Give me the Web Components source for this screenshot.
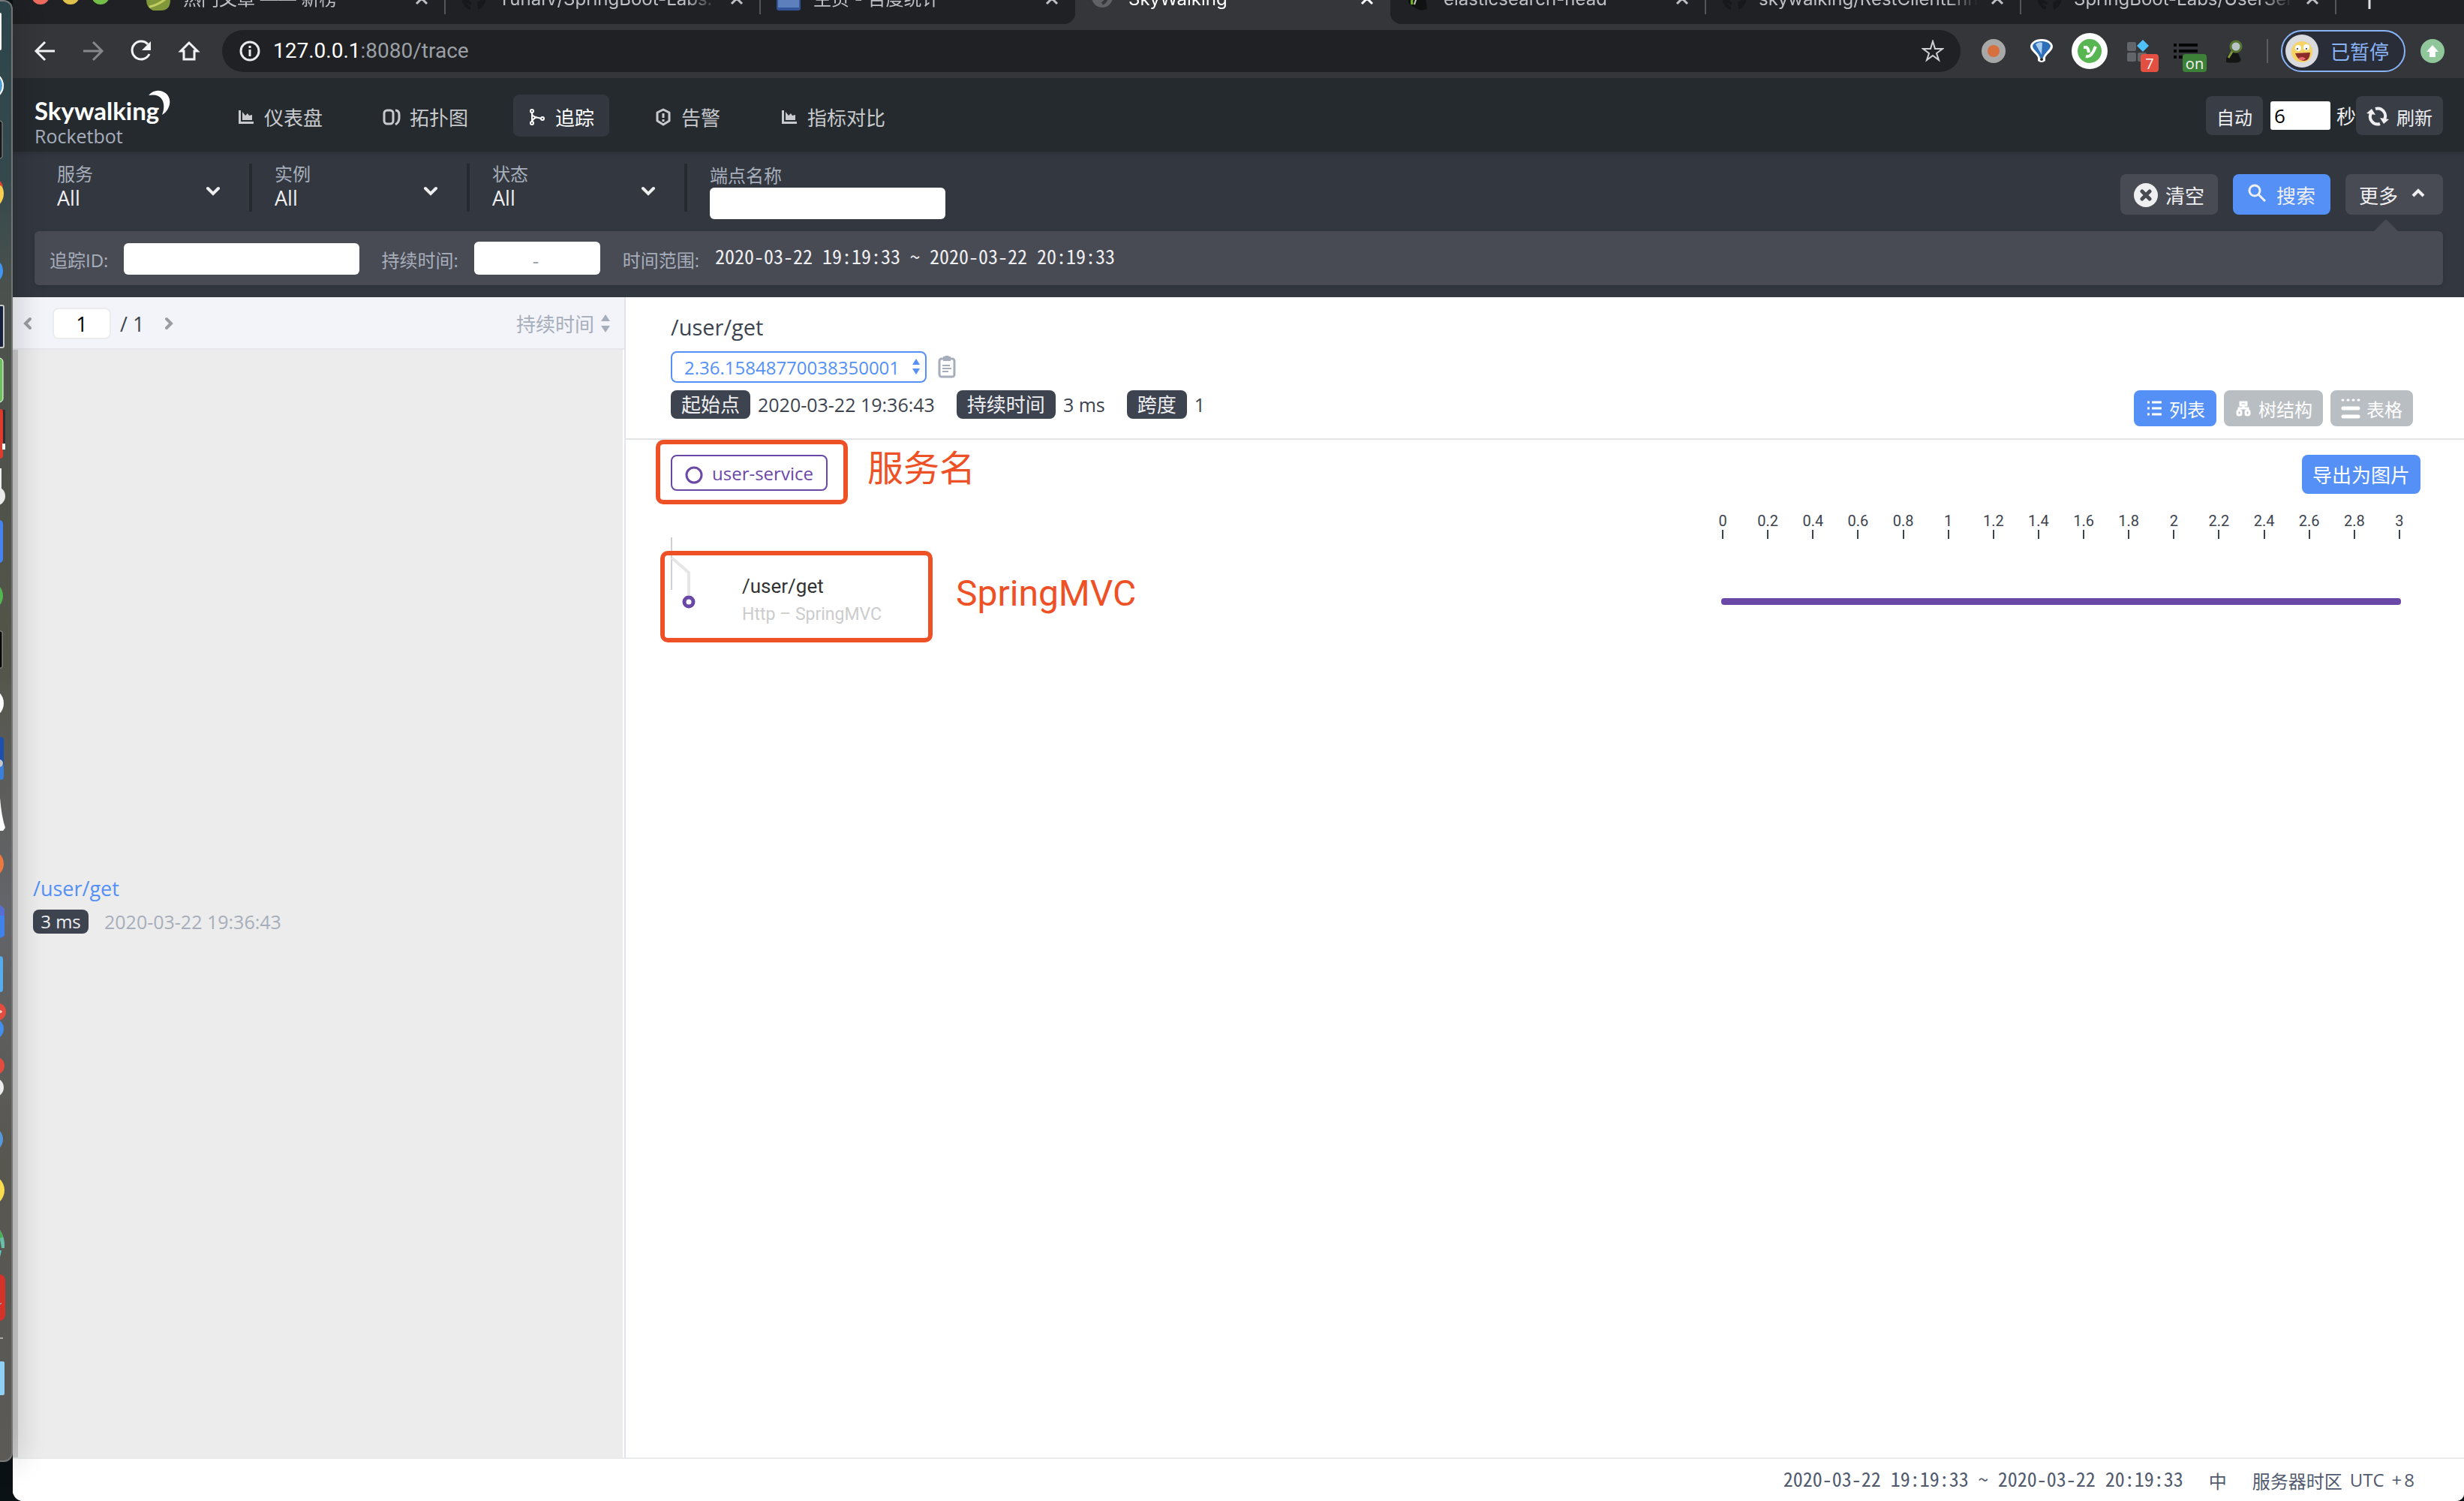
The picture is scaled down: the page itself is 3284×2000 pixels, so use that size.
<!DOCTYPE html>
<html lang="zh-CN">
<head>
<meta charset="utf-8">
<title>SkyWalking</title>
<style>
  html, body { margin: 0; height: 100%; }
  body { background: #0b1215; font-family: "Open Sans", "Noto Sans CJK SC", sans-serif; font-size: 26px; overflow: hidden; }
</style>
</head>
<body>
<desk-top></desk-top>
<script>
const BASE = `<style>
  *, *::before, *::after { box-sizing: border-box; }
  :host { display: block; }
  button, input, select { font: inherit; color: inherit; margin: 0; padding: 0; border: 0; background: none; outline: 0; }
  button { display: inline-flex; align-items: center; cursor: pointer; white-space: nowrap; }
  select { appearance: none; }
  a { color: inherit; text-decoration: none; }
  svg { display: block; flex: none; }
</style>`;

function define(tag, html) {
  const template = document.createElement('template');
  customElements.define(tag, class extends HTMLElement {
    constructor() {
      super();
      template.innerHTML = BASE + (typeof html === 'function' ? html(this) : html);
      this.attachShadow({ mode: 'open' }).append(template.content.cloneNode(true));
    }
  });
}

const ICONS = {
  chart: '<svg width="22" height="22" viewBox="0 0 22 22" fill="currentColor"><path d="M1 2h3v15h17v3H1z"/><path d="M6 15V4l4 5 3-3 2 3 4-1v7z"/></svg>',
  topo: '<svg width="24" height="24" viewBox="0 0 24 24" fill="none" stroke="currentColor" stroke-width="3"><rect x="2" y="3" width="12" height="18" rx="4"/><path d="M17 3q5 0 5 6v4q0 6-5 9" /></svg>',
  trace: '<svg width="24" height="24" viewBox="0 0 24 24" fill="none" stroke="currentColor" stroke-width="2"><circle cx="5" cy="4" r="2"/><circle cx="5" cy="20" r="2"/><circle cx="19" cy="14" r="2"/><path d="M5 6v12M5 8c2 5 6 4 12 6M5 18c1-4 4-5 7-6"/></svg>',
  alarm: '<svg width="24" height="24" viewBox="0 0 24 24" fill="none" stroke="currentColor" stroke-width="3"><path d="M12 2l8 4v11l-8 5-8-5V6z" stroke-linejoin="round"/><path d="M12 7v6M12 15v3"/></svg>',
  close: '<svg width="18" height="18" viewBox="0 0 18 18" stroke="currentColor" stroke-width="3"><path d="M2 2l14 14M16 2L2 16"/></svg>',
  github: '<svg width="32" height="32" viewBox="0 0 32 32"><path fill="#17181b" d="M16 0a16 16 0 0 0-5 31c1 0 1-4 1-5-4 0-5-3-5-4 2 1 3 3 6 2 0-2 1-3 1-3-7-2-8-9-4-13 0-1 0-3 1-4 2 0 3 1 4 2h5c1-1 3-2 4-2 1 1 1 3 1 4 3 4 3 11-4 13 1 1 1 9 1 10A16 16 0 0 0 16 0z"/></svg>',
  leaf: '<svg width="32" height="32" viewBox="0 0 32 32"><path d="M0 6h32v12q0 14-13 14H9Q0 28 0 18z" fill="#81983a"/><path d="M4 27Q16 25 29 14" stroke="#c3cf65" stroke-width="3" fill="none"/></svg>',
  stat: '<svg width="32" height="32" viewBox="0 0 32 32"><rect width="32" height="32" rx="3" fill="#31549b"/><rect x="2" y="2" width="28" height="26" fill="#5d80bc"/></svg>',
  spin: '<svg width="28" height="32" viewBox="0 0 28 32"><circle cx="14" cy="14" r="14" fill="#606165"/><path d="M20 8q3 9-6 15" stroke="#35363a" stroke-width="4" fill="none"/></svg>',
  elastic: '<svg width="28" height="32" viewBox="0 0 28 32"><path d="M2 8h22l3 22-8 2-9-4-8-6z" fill="#101211"/><path d="M8 14q-2 5-1 10" stroke="#79b82a" stroke-width="3" fill="none"/><path d="M13 15l-3 9" stroke="#c9d3c0" stroke-width="2"/></svg>'
};

define('desk-top', `<style>
  :host { display: flex; height: 100vh; }
  main { flex: 1; min-width: 0; display: flex; flex-direction: column; background: #fff; border-radius: 0 0 10px 14px; overflow: hidden; }
  trace-page { flex: 1; min-height: 0; }
</style>
<mac-dock></mac-dock>
<main><tab-strip></tab-strip><address-bar></address-bar><app-header></app-header><filter-bar></filter-bar><trace-page></trace-page><app-footer></app-footer></main>`);

define('mac-dock', `<style>
  :host { position: relative; z-index: 2; flex: none; width: 17px; }
  .tray { height: 1948px; overflow: hidden; border-radius: 0 12px 12px 0; border: 2px solid #777a79; border-left: 0; border-right-color: #727574;
    background: linear-gradient(#2c454b, #35494d 12%, #4b514d 20%, #545549 45%, #64656a 62%, #57564f 80%, #5b5a57);
    box-shadow: 0 0 40px rgba(0,0,0,.32); }
</style>
<div class="tray"><svg width="15" height="1944" viewBox="0 2 15 1944">
  <rect x="-9" y="17" width="11" height="50" rx="2" fill="#fff"/>
  <circle cx="-14" cy="114" r="18" fill="#4a9fd8" stroke="#fff" stroke-width="2"/>
  <rect x="-9" y="161" width="12" height="50" rx="3" fill="#191919" stroke="#8c8e8e" stroke-width="1"/>
  <circle cx="-16" cy="258" r="21" fill="#fbcf4f"/><path d="M0 241q3 3 4 8l-4-2z" fill="#d8472c"/>
  <circle cx="-14" cy="361" r="18" fill="#3f96f4"/>
  <rect x="-9" y="407" width="14" height="56" rx="2" fill="#17213e" stroke="#c4c6c7" stroke-width="2"/>
  <rect x="-9" y="477" width="13" height="59" rx="5" fill="#6cc15b" stroke="#fff" stroke-width="1"/>
  <rect x="0" y="546" width="7" height="50" fill="#2c2e31"/><rect x="-9" y="545" width="13" height="66" rx="4" fill="#dd3c2c"/><rect x="3" y="591" width="4" height="8" fill="#fff"/>
  <rect x="-4" y="624" width="6" height="34" fill="#eee"/><circle cx="-6" cy="661" r="13" fill="#ebebeb"/>
  <rect x="-9" y="693" width="13" height="57" rx="5" fill="#4484f2"/>
  <circle cx="-16" cy="794" r="20" fill="#51b850"/>
  <rect x="-9" y="841" width="12" height="49" rx="2" fill="#080808" stroke="#9b9b99" stroke-width="1"/>
  <circle cx="-15" cy="937" r="20" fill="#fff"/>
  <rect x="-9" y="982" width="14" height="57" rx="4" fill="#1d4fae"/><rect x="-9" y="1018" width="14" height="21" rx="4" fill="#397fdc"/><circle cx="-1" cy="1017" r="5" fill="#c6c7c7"/>
  <path d="M0 1063q2 25 7 40l-3 4H0z" fill="#fff"/>
  <circle cx="-14" cy="1151" r="19" fill="#ed7940"/>
  <path d="M0 1206l6 5v36l-6 3z" fill="#3f82ec"/><path d="M0 1206l6 5v9H0z" fill="#596ed2"/>
  <rect x="-9" y="1274" width="13" height="48" rx="4" fill="#54adee"/>
  <circle cx="-9" cy="1371" r="14" fill="#438ff0"/><circle cx="-4" cy="1348" r="12" fill="#e24d3f"/><path d="M0 1348h3M1 1346v4" stroke="#fff"/>
  <circle cx="-6" cy="1420" r="12" fill="#e24d3f"/><circle cx="-8" cy="1449" r="13" fill="#ececec"/>
  <circle cx="-13" cy="1518" r="17" fill="#569ade"/>
  <circle cx="-15" cy="1586" r="21" fill="#fbdc4d"/>
  <path d="M0 1639q7 10 6 24h-4l-2-12z" fill="#69bfa7"/><path d="M0 1639l4 9-4 2z" fill="#4cae52"/><path d="M0 1666h2l-2 9z" fill="#63cfc9"/>
  <rect x="-12" y="1698" width="19" height="62" rx="8" fill="#d5322a"/><path d="M0 1738l2-2" stroke="#fff"/>
  <path d="M0 1783h4" stroke="#aaa" stroke-width="2"/>
  <rect x="-9" y="1814" width="15" height="45" rx="2" fill="#8fd0f5"/>
</svg></div>`);

define('tab-strip', `<style>
  :host { height: 32px; overflow: hidden; background: #202124; position: relative; flex: none; }
  .row { display: flex; margin-top: -36px; height: 68px; padding-left: 156px; align-items: stretch; color: #bdc1c6; }
  .lights { position: absolute; left: 25px; top: -18px; display: flex; gap: 16px; }
  .lights i { width: 24px; height: 24px; border-radius: 50%; }
  .new { align-self: center; margin-left: 31px; color: #dfe1e5; }
</style>
<div class="lights"><i style="background:#ed6a5e"></i><i style="background:#e0c04c"></i><i style="background:#72be47"></i></div>
<div class="row">
  <browser-tab icon="leaf">热门文章 —— 新榜</browser-tab>
  <browser-tab icon="github">YunaiV/SpringBoot-Labs: </browser-tab>
  <browser-tab icon="stat" bare>主页 - 百度统计</browser-tab>
  <browser-tab icon="spin" active>SkyWalking</browser-tab>
  <browser-tab icon="elastic">elasticsearch-head</browser-tab>
  <browser-tab icon="github">skywalking/RestClientEnhancer</browser-tab>
  <browser-tab icon="github">SpringBoot-Labs/UserService</browser-tab>
  <button class="new" aria-label="新标签页"><svg width="28" height="28" viewBox="0 0 28 28" stroke="currentColor" stroke-width="3"><path d="M14 0v28M0 14h28"/></svg></button>
</div>`);

define('browser-tab', el => `<style>
  :host { flex: none; width: 420px; display: flex; align-items: center; padding: 0 22px; position: relative; font: 24px/32px Inter, "Noto Sans CJK SC", sans-serif; }
  :host::after { content: ""; position: absolute; right: -1px; bottom: 13px; width: 2px; height: 40px; background: #54565a; }
  :host([active]) { background: #35363a; color: #fff; border-radius: 16px 16px 0 0; }
  :host([active])::after, :host([bare])::after { display: none; }
  :host([active])::before { content: ""; position: absolute; left: -16px; right: -16px; bottom: 0; height: 16px;
    background: radial-gradient(circle at 0 0, transparent 16px, #35363a 17px) left / 16px 16px no-repeat, radial-gradient(circle at 100% 0, transparent 16px, #35363a 17px) right / 16px 16px no-repeat; }
  .icon { width: 32px; margin-right: 17px; }
  .title { flex: 1; overflow: hidden; white-space: nowrap; padding-top: 2px; -webkit-mask-image: linear-gradient(to right, #000 250px, transparent 292px); mask-image: linear-gradient(to right, #000 250px, transparent 292px); }
</style>
<span class="icon">${ICONS[el.getAttribute('icon')]}</span><span class="title"><slot></slot></span><button aria-label="关闭">${ICONS.close}</button>`);

define('address-bar', `<style>
  :host { height: 72px; flex: none; background: #35363a; display: flex; align-items: center; padding: 0 26px 0 27px; color: #f1f3f4; }
  .nav { display: flex; gap: 32px; margin-right: 28px; }
  .dim { color: #85878a; }
  .box { flex: 1; height: 56px; border-radius: 28px; background: #202124; display: flex; align-items: center; padding: 0 22px; font: 28px/40px Roboto, sans-serif; }
  .box span { flex: 1; margin-left: 16px; color: #fff; }
  .box em { font-style: normal; color: #9aa0a6; }
  .ext { display: flex; align-items: center; margin-left: 28px; gap: 32px; }
  .ext > span { position: relative; width: 32px; height: 48px; display: flex; align-items: center; justify-content: center; }
  .badge { position: absolute; right: -12px; bottom: -4px; width: 24px; height: 24px; border-radius: 4px; background: #e34f41; font: 20px/26px "Open Sans", sans-serif; text-align: center; }
  .on { width: 32px; background: #3d8038; }
  .bar { width: 2px; height: 32px; background: #5b5d61; margin: 0 17px 0 28px; }
  .pill { width: 166px; height: 56px; border: 2px solid #8ab4f8; border-radius: 28px; background: #292d37; color: #8ab4f8; padding-left: 4px; gap: 16px; margin-right: 20px; }
</style>
<div class="nav">
  <button aria-label="后退"><svg width="32" height="32" viewBox="0 0 32 32" fill="none" stroke="currentColor" stroke-width="3"><path d="M29 16H5M16 4L4 16l12 12"/></svg></button>
  <button aria-label="前进" class="dim"><svg width="32" height="32" viewBox="0 0 32 32" fill="none" stroke="currentColor" stroke-width="3"><path d="M3 16h24M16 4l12 12-12 12"/></svg></button>
  <button aria-label="重新加载"><svg width="32" height="32" viewBox="0 0 32 32" fill="none" stroke="currentColor" stroke-width="3"><path d="M27 20a12 12 0 1 1-2-13"/><path d="M29 3v12H17z" fill="currentColor" stroke="none"/></svg></button>
  <button aria-label="主页"><svg width="32" height="32" viewBox="0 0 32 32" fill="none" stroke="currentColor" stroke-width="3"><path d="M16 5L5 16h4v11h14V16h4z"/></svg></button>
</div>
<div class="box">
  <svg width="30" height="30" viewBox="0 0 30 30" fill="none" stroke="#e8eaed" stroke-width="3"><circle cx="15" cy="15" r="12"/><path d="M15 13v9M15 8v3"/></svg>
  <span>127.0.0.1<em>:8080/trace</em></span>
  <svg width="30" height="30" viewBox="0 0 30 30" fill="none" stroke="#cfd1d4" stroke-width="2"><path d="M15 2l3 10h10l-8 6 3 9-8-6-8 6 3-9-8-6h10z"/></svg>
</div>
<div class="ext">
  <span><svg width="32" height="32" viewBox="0 0 32 32"><circle cx="16" cy="16" r="16" fill="#a8a8a8"/><circle cx="16" cy="16" r="8" fill="#d6703e"/></svg></span>
  <span><svg width="32" height="32" viewBox="0 0 32 32"><path d="M16 0C7 0 1 5 1 10c0 6 9 10 10 15v4q5 4 10 0v-4c1-5 10-9 10-15C31 5 25 0 16 0z" fill="#fff"/><path d="M4 9c2-8 22-8 24 0 0 5-8 9-10 16h-4C12 18 4 14 4 9z" fill="#2f6fb8"/><path d="M8 7q5-4 9-2l-1 16z" fill="#a9cdf2"/><circle cx="16" cy="27" r="2" fill="#222"/></svg></span>
  <span><svg width="48" height="48" viewBox="0 0 48 48"><circle cx="24" cy="24" r="24" fill="#fff"/><circle cx="24" cy="24" r="16" fill="#58b652"/><path d="M16 19h3q3 0 4 7M32 18c-3 8-7 15-13 13" stroke="#fff" stroke-width="4" fill="none"/></svg></span>
  <span><svg width="32" height="32" viewBox="0 0 32 32" fill="#62656a"><rect x="2" y="4" width="12" height="12" rx="2"/><rect x="2" y="18" width="12" height="12" rx="2"/><rect x="16" y="18" width="12" height="12" rx="2"/><path d="M23 1l8 8-8 8-8-8z" fill="#4fc1f8"/></svg><span class="badge">7</span></span>
  <span><svg width="32" height="32" viewBox="0 0 32 32" fill="#050505"><path d="M0 6h4v4H0zM7 6h25v4H7zM0 14h4v4H0zM7 14h25v4H7zM0 22h4v4H0zM7 22h5v4H7z"/></svg><span class="badge on">on</span></span>
  <span><svg width="32" height="32" viewBox="0 0 32 32"><path d="M6 28q0-7 7-10l9 1 4 9-3 3q-9 1-17 0z" fill="#151515"/><path d="M15 15L9 25" stroke="#80973d" stroke-width="3"/><circle cx="19" cy="10" r="7" fill="#b9c2c7" stroke="#55752f" stroke-width="3"/></svg></span>
</div>
<i class="bar"></i>
<button class="pill"><svg width="44" height="44" viewBox="0 0 44 44"><circle cx="22" cy="22" r="22" fill="#d9dbde"/><circle cx="22" cy="23" r="14" fill="#f6d365"/><circle cx="17" cy="18" r="4" fill="#fff"/><circle cx="28" cy="17" r="4" fill="#fff"/><circle cx="16" cy="19" r="1" fill="#222"/><circle cx="28" cy="19" r="1" fill="#222"/><path d="M13 25l20-1q-1 12-9 11t-11-10z" fill="#8b2c2b"/><path d="M17 32q5-4 10 0-5 5-10 0z" fill="#e86a73"/></svg>已暂停</button>
<button aria-label="更新"><svg width="32" height="32" viewBox="0 0 32 32"><circle cx="16" cy="16" r="16" fill="#8fc69a"/><path d="M16 8l8 9h-4v7h-8v-7H8z" fill="#fff"/></svg></button>`);

define('app-header', `<style>
  :host { height: 98px; flex: none; background: #252a2f; display: flex; align-items: center; padding: 2px 28px 0 29px; color: #efeff1; }
  .logo { position: relative; width: 250px; padding-top: 18px; color: #fff; display: block; }
  .logo b { display: block; font: 700 33px/36px Lato, sans-serif; }
  .logo small { display: block; font-size: 25px; line-height: 32px; color: #a7aebb; }
  .logo svg { position: absolute; left: 150px; top: 8px; }
  nav { display: flex; gap: 40px; flex: 1; }
  .ctl { height: 52px; border-radius: 8px; background: #393d46; padding: 2px 14px 0; font-size: 24px; gap: 10px; }
  input { width: 80px; height: 38px; margin: 0 8px 0 10px; background: #fff; color: #000; padding: 0 5px; border-radius: 3px; }
</style>
<a class="logo" href="#"><b>Skywalking</b><small>Rocketbot</small><svg width="32" height="36" viewBox="0 0 32 36"><path d="M2 8Q10-1 21 3c14 6 11 24-1 31 5-12 3-30-18-26z" fill="#fff"/></svg></a>
<nav><nav-item icon="chart">仪表盘</nav-item><nav-item icon="topo">拓扑图</nav-item><nav-item icon="trace" active>追踪</nav-item><nav-item icon="alarm">告警</nav-item><nav-item icon="chart">指标对比</nav-item></nav>
<button class="ctl">自动</button>
<input id="sec" value="6" aria-label="秒"><label for="sec">秒</label>
<button class="ctl"><svg width="30" height="28" viewBox="0 0 30 28" fill="none" stroke="currentColor" stroke-width="4"><path d="M18 24A10 10 0 0 1 6 10M12 4a10 10 0 0 1 12 14"/><path d="M0 10l7-6 5 8zM30 18l-7 6-5-8z" fill="currentColor" stroke="none"/></svg>刷新</button>`);

define('nav-item', el => `<style>
  a { display: flex; align-items: center; height: 56px; padding: 3px 20px 0; gap: 12px; border-radius: 8px; color: #c8cacd; white-space: nowrap; }
  :host([active]) a { background: #333840; color: #fff; }
  span { width: 24px; display: flex; justify-content: center; }
</style><a href="#"><span>${ICONS[el.getAttribute('icon')]}</span><slot></slot></a>`);

define('filter-select', el => `<style>
  :host { flex: none; width: 290px; height: 64px; padding: 0 38px 0 30px; border-right: 4px solid #252a2f; }
  div { display: grid; grid-template-columns: 1fr 20px; align-items: center; }
  label { grid-column: 1 / 3; font-size: 24px; line-height: 28px; color: #a7aebb; }
  select { grid-area: 2 / 1 / 3 / 3; font-size: 27px; line-height: 36px; height: 36px; color: #efeff1; }
  svg { grid-area: 2 / 2; pointer-events: none; align-self: start; }
</style><div><label for="s">${el.getAttribute('label')}</label><select id="s"><option>All</option></select>
<svg width="20" height="16" viewBox="0 0 20 16" fill="none" stroke="#efeff1" stroke-width="4" stroke-linecap="round"><path d="M3 5l7 7 7-7"/></svg></div>`);

define('filter-bar', `<style>
  :host { height: 194px; flex: none; background: #333840; padding: 16px 28px 0 29px; color: #efeff1; box-shadow: inset 0 4px 4px rgba(0,0,0,.1); }
  .top { display: flex; height: 90px; }
  .end { padding: 2px 0 0 30px; flex: 1; }
  .end label { display: block; font-size: 24px; line-height: 28px; margin-bottom: 2px; color: #a7aebb; }
  input { display: block; width: 314px; height: 42px; background: #fff; color: #000; border-radius: 6px; padding: 0 8px; }
  .acts { display: flex; gap: 20px; padding-top: 14px; }
  .acts button { width: 130px; height: 54px; border-radius: 8px; background: #484b54; justify-content: center; gap: 10px; padding-top: 2px; }
  .acts .go { background: #5490f6; gap: 14px; }
  .go svg, .more svg { margin-bottom: 6px; }
  .acts .more { gap: 18px; padding-right: 6px; position: relative; }
  .more::after { content: ""; position: absolute; top: 60px; left: 38px; border: 16px solid transparent; border-top: 0; border-bottom-color: #484b54; }
  .panel { display: flex; align-items: center; height: 72px; border-radius: 6px; background: #484b54; padding: 2px 20px 0; box-shadow: 0 2px 6px rgba(0,0,0,.15); }
  .panel label { font-size: 24px; color: #a7aebb; margin-right: 21px; white-space: nowrap; }
  .panel > input { margin-right: 29px; }
  .range { display: flex; align-items: center; width: 168px; height: 44px; border-radius: 6px; background: #fff; color: #9aa1ae; margin: 0 30px 2px 0; }
  .range input { width: 78px; }
  .range span { padding-top: 6px; }
  .time { font: 26px/40px "Noto Sans Mono CJK SC", "Liberation Mono", monospace; margin-bottom: 8px; white-space: pre; }
</style>
<div class="top">
  <filter-select label="服务"></filter-select><filter-select label="实例"></filter-select><filter-select label="状态"></filter-select>
  <div class="end"><label for="ep">端点名称</label><input id="ep"></div>
  <div class="acts">
    <button><svg width="32" height="32" viewBox="0 0 32 32"><circle cx="16" cy="16" r="16" fill="#efeff1"/><path d="M11 11l10 10M21 11L11 21" stroke="#484b54" stroke-width="5" stroke-linecap="round"/></svg>清空</button>
    <button class="go"><svg width="24" height="24" viewBox="0 0 24 24" fill="none" stroke="#efeff1" stroke-width="3"><circle cx="9" cy="9" r="7"/><path d="M14 14l9 9"/></svg>搜索</button>
    <button class="more">更多<svg width="18" height="14" viewBox="0 0 18 14" fill="none" stroke="#efeff1" stroke-width="4"><path d="M2 11l7-7 7 7"/></svg></button>
  </div>
</div>
<div class="panel">
  <label for="tid">追踪ID:</label><input id="tid">
  <label for="dmin">持续时间:</label><div class="range"><input id="dmin"><span>-</span><input aria-label="最大持续时间"></div>
  <label>时间范围:</label><span class="time">2020-03-22 19:19:33 ~ 2020-03-22 20:19:33</span>
</div>`);

define('trace-page', `<style>
  :host { display: flex; } trace-detail { flex: 1; min-width: 0; }
</style><trace-list></trace-list><trace-detail></trace-detail>`);

define('trace-list', `<style>
  :host { flex: none; width: 817px; border-right: 2px solid #e3e5ea; display: flex; flex-direction: column; color: #3d444f; }
  header { height: 70px; background: #f3f4f9; border-bottom: 2px solid #e6e7ea; display: flex; align-items: center; gap: 26px; padding: 2px 18px 0 13px; }
  header button { color: #9a9ca4; }
  .pages { font-size: 27px; flex: 1; display: flex; align-items: center; gap: 12px; }
  .pages input { width: 78px; height: 42px; border: 2px solid #ececef; border-radius: 8px; background: #fff; text-align: center; color: #000; }
  .pages button { margin-left: 14px; }
  header .sort { color: #a7aebb; gap: 8px; }
  .list { flex: 1; background: #ececec; border-left: 7px solid #cbcbcb; border-right: 2px solid #fff; padding-left: 20px; display: flex; flex-direction: column; justify-content: center; }
  a { color: #5490f6; font-size: 27px; line-height: 40px; padding-bottom: 8px; }
  .meta { display: flex; align-items: center; gap: 21px; color: #a7aebb; font-size: 25px; line-height: 32px; }
  .tag { background: #3d444f; color: #efeff1; border-radius: 8px; width: 74px; text-align: center; font-size: 24px; }
</style>
<header>
  <button aria-label="上一页"><svg width="14" height="20" viewBox="0 0 14 20" fill="none" stroke="currentColor" stroke-width="4" stroke-linecap="round"><path d="M10 4l-6 6 6 6"/></svg></button>
  <span class="pages"><input value="1" aria-label="页码">/ 1<button aria-label="下一页"><svg width="14" height="20" viewBox="0 0 14 20" fill="none" stroke="currentColor" stroke-width="4" stroke-linecap="round"><path d="M4 4l6 6-6 6"/></svg></button></span>
  <button class="sort">持续时间<svg width="14" height="26" viewBox="0 0 14 26" fill="currentColor"><path d="M7 1l6 9H1zM7 25l6-9H1z"/></svg></button>
</header>
<div class="list"><a href="#">/user/get</a><div class="meta"><span class="tag">3 ms</span>2020-03-22 19:36:43</div></div>`);

define('trace-detail', `<style>
  header { position: relative; height: 190px; border-bottom: 2px solid #e3e4e6; padding: 20px 68px 0 60px; display: flex; justify-content: space-between; color: #3d444f; }
  h1 { margin: 0 0 12px; font-size: 29px; line-height: 40px; font-weight: 400; }
  .pick { display: flex; align-items: center; gap: 15px; height: 42px; margin-bottom: 10px; }
  .sel { display: grid; grid-template-columns: 1fr 20px; align-items: center; width: 341px; height: 42px; }
  select { grid-area: 1 / 1 / 2 / 3; height: 42px; border: 2px solid #5490f6; border-radius: 8px; color: #5490f6; font-size: 24px; padding: 0 26px 0 16px; }
  .sel svg { grid-area: 1 / 2; pointer-events: none; }
  .facts { display: flex; align-items: center; font-size: 25px; height: 38px; gap: 10px; }
  .facts b { font-weight: 400; font-size: 26px; line-height: 38px; background: #3d444f; color: #efeff1; border-radius: 8px; padding: 0 14px; }
  .facts span { margin-right: 19px; }
  .views { display: flex; gap: 10px; align-self: flex-end; padding-bottom: 16px; }
  .views button { height: 48px; min-width: 110px; justify-content: center; border-radius: 8px; background: #b9bec3; color: #fff; font-size: 24px; padding: 0 14px; gap: 8px; }
  .views .on { background: #5490f6; }
</style>
<header>
  <div>
    <h1>/user/get</h1>
    <div class="pick"><div class="sel"><select aria-label="追踪ID"><option>2.36.15848770038350001</option></select><svg width="12" height="24" viewBox="0 0 12 24" fill="#5490f6"><path d="M6 1l5 8H1zM6 22l5-8H1z"/></svg></div>
      <button aria-label="复制"><svg width="24" height="32" viewBox="0 0 24 32" fill="none" stroke="#a7aebb" stroke-width="3"><rect x="2" y="5" width="20" height="24" rx="3"/><path d="M7 5h10" stroke-width="6"/><path d="M12 1v3" stroke-width="5"/><path d="M6 14h10M6 18h12M6 22h8" stroke-width="2"/></svg></button></div>
    <div class="facts"><b>起始点</b><span>2020-03-22 19:36:43</span><b>持续时间</b><span>3 ms</span><b>跨度</b><span>1</span></div>
  </div>
  <div class="views">
    <button class="on"><svg width="24" height="22" viewBox="0 0 24 22" stroke="#fff" stroke-width="3"><path d="M3 3h3M9 3h13M3 11h3M9 11h13M3 19h3M9 19h13"/></svg>列表</button>
    <button><svg width="24" height="22" viewBox="0 0 24 22" fill="none" stroke="#fff" stroke-width="3"><path d="M8 3h8v4H8zM12 7v5M6 15v-4h12v4"/><rect x="4" y="14" width="5" height="6" rx="2"/><rect x="15" y="14" width="5" height="6" rx="2"/></svg>树结构</button>
    <button><svg width="26" height="28" viewBox="0 0 26 28" stroke="#fff" stroke-linecap="round"><path d="M2 3h1M9 3h1M16 3h1M23 3h1" stroke-width="3"/><path d="M3 14h20M3 25h20" stroke-width="5"/></svg>表格</button>
  </div>
</header>
<trace-chart></trace-chart>`);

define('trace-chart', `<style>
  :host { position: relative; padding: 20px 56px 0 60px; color: #3d444f; }
  .row { display: flex; justify-content: space-between; align-items: flex-start; }
  .svc { display: flex; align-items: center; gap: 12px; height: 48px; padding: 0 17px; border: 2px solid #6a48a8; border-radius: 8px; color: #6a48a8; font-size: 24px; }
  .svc svg { margin-top: 6px; }
  .save { height: 52px; border-radius: 8px; background: #5490f6; color: #fff; padding: 0 14px; margin-right: 2px; }
  .node { display: flex; padding-top: 58px; font-family: Roboto, sans-serif; }
  .names { padding: 47px 0 0 55px; line-height: 37px; color: #333; }
  .names small { display: block; font-size: 23px; color: #ccc; }
  .time { width: 962px; }
  .axis { display: grid; grid-template-columns: repeat(16, 1fr); padding-top: 24px; font: 20px/24px Roboto, sans-serif; text-align: center; }
  .axis span::after { content: ""; display: block; width: 2px; height: 12px; background: #3d444f; margin: 0 auto; }
  .bar { height: 9px; border-radius: 4px; background: #6a48a8; margin: 79px 28px 0; }
  .mark { position: absolute; border: 6px solid #ee5126; border-radius: 10px; }
  .note { position: absolute; color: #ee5126; font: 48px/56px Roboto, "Noto Sans CJK SC", sans-serif; }
</style>
<div class="row"><div class="svc"><svg width="24" height="24" viewBox="0 0 24 24" fill="none" stroke="currentColor" stroke-width="3"><circle cx="12" cy="12" r="10"/></svg>user-service</div><button class="save">导出为图片</button></div>
<div class="row">
  <div class="node"><svg width="40" height="100" viewBox="0 0 40 100" fill="none"><path d="M1 0v70" stroke="#d0d0d2" stroke-width="2"/><path d="M1 27l23 20v30" stroke="#e6e6e6" stroke-width="4"/><circle cx="24" cy="86" r="6" stroke="#6a48a8" stroke-width="5" fill="#fff"/></svg><div class="names">/user/get<small>Http – SpringMVC</small></div></div>
  <div class="time"><div class="axis">${[0, 0.2, 0.4, 0.6, 0.8, 1, 1.2, 1.4, 1.6, 1.8, 2, 2.2, 2.4, 2.6, 2.8, 3].map(v => `<span>${v}</span>`).join('')}</div><div class="bar"></div></div>
</div>
<div class="mark" style="left:40px;top:0;width:256px;height:86px"></div><div class="note" style="left:322px;top:11px">服务名</div>
<div class="mark" style="left:46px;top:148px;width:363px;height:122px"></div><div class="note" style="left:440px;top:177px">SpringMVC</div>`);

define('app-footer', `<style>
  :host { height: 58px; flex: none; border-top: 2px solid #e9eaec; background: #fff; display: flex; justify-content: flex-end; align-items: center; padding: 0 66px 0 0; color: #515a6e; font-size: 24px; gap: 34px; }
  .time { font: 26px/40px "Noto Sans Mono CJK SC", "Liberation Mono", monospace; margin-bottom: 4px; white-space: pre; }
  .zone { display: flex; gap: 10px; } .zone i { font-style: normal; margin-right: -7px; }
</style><span class="time">2020-03-22 19:19:33 ~ 2020-03-22 20:19:33</span><a href="#">中</a><span class="zone"><span>服务器时区</span><span>UTC</span><i>+</i><span>8</span></span>`);
</script>
</body>
</html>
